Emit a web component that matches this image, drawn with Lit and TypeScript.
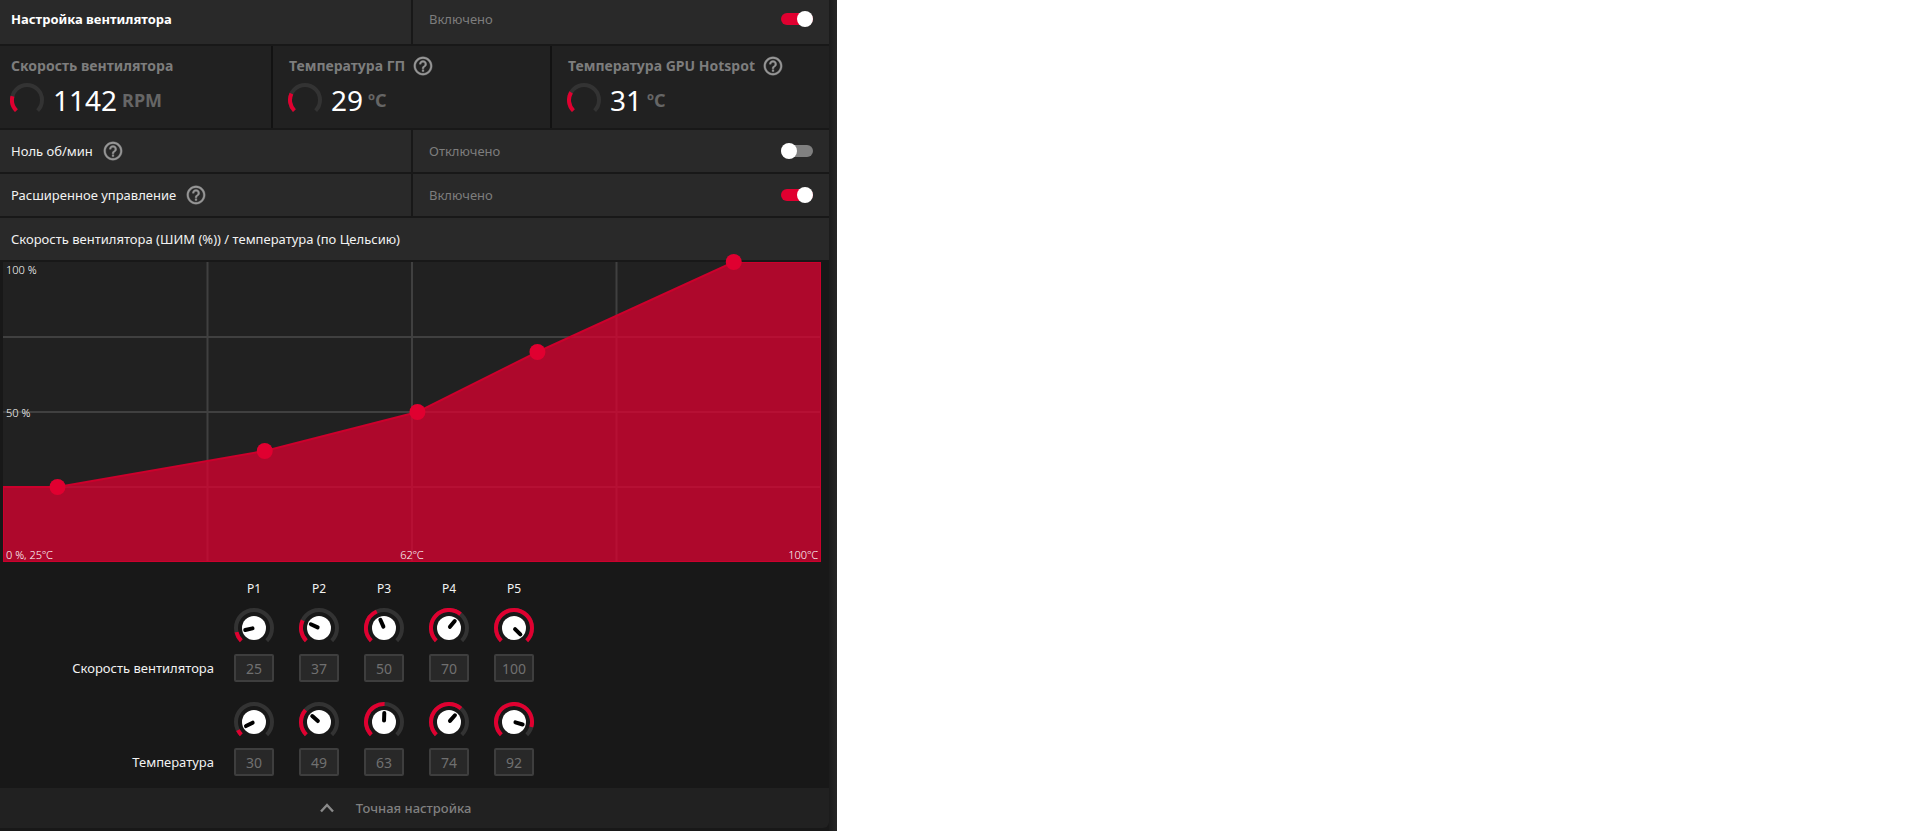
import { LitElement, html, svg, css, nothing } from "lit";
import { customElement, state } from "lit/decorators.js";

interface Point {
  speed: number;
  temp: number;
}

type Field = keyof Point;

const RANGE: Record<Field, [number, number]> = {
  speed: [15, 100],
  temp: [25, 100],
};

const CHART_W = 818;
const CHART_H = 300;

/** Point on a circle; the angle runs clockwise from the top, in degrees. */
function polar(c: number, r: number, deg: number): string {
  const a = ((deg - 90) * Math.PI) / 180;
  return `${(c + r * Math.cos(a)).toFixed(2)} ${(c + r * Math.sin(a)).toFixed(2)}`;
}

/** Arc that starts at the lower left and covers part of a 270 degree sweep. */
function arc(c: number, r: number, part: number): string {
  const sweep = 270 * part;
  return `M${polar(c, r, -135)} A${r} ${r} 0 ${sweep > 180 ? 1 : 0} 1 ${polar(c, r, sweep - 135)}`;
}

@customElement("app-root")
export class AppRoot extends LitElement {
  @state() private fanTuning = true;
  @state() private zeroRpm = false;
  @state() private advanced = true;
  @state() private points: Point[] = [
    { speed: 25, temp: 30 },
    { speed: 37, temp: 49 },
    { speed: 50, temp: 63 },
    { speed: 70, temp: 74 },
    { speed: 100, temp: 92 },
  ];

  static styles = css`
    :host {
      display: block;
      font-family: "Noto Sans", "Open Sans", sans-serif;
      font-size: 13px;
      line-height: 20px;
      color: #f2f2f2;
    }
    * {
      box-sizing: border-box;
    }
    .panel {
      max-width: 837px;
      padding: 0 8px 3px 0;
      background: linear-gradient(to left, #262626, #1b1b1b 8px, #181818 8px);
    }
    .stack {
      display: grid;
      gap: 2px;
    }
    .row {
      display: grid;
      grid-template-columns: 411fr 416fr;
      gap: 2px;
    }
    .cell {
      display: flex;
      align-items: center;
      gap: 11px;
      min-height: 42px;
      padding: 0 16px;
      background: #292929;
    }
    .cell:first-child {
      padding-left: 11px;
    }
    .head .cell {
      min-height: 44px;
      padding-bottom: 6px;
    }
    .head h2 {
      margin: 0;
      font-size: 13px;
      font-weight: 700;
      color: #fff;
    }
    .status {
      justify-content: space-between;
      color: #7d7d7d;
    }
    .help {
      display: flex;
      padding: 0;
      border: 0;
      background: none;
      color: #969696;
    }
    .help svg {
      width: 22px;
      height: 22px;
      margin: 0 -2px;
      fill: currentColor;
      stroke: currentColor;
      stroke-width: 0.4;
    }
    .switch {
      appearance: none;
      display: flex;
      align-items: center;
      width: 32px;
      height: 12px;
      margin: 0;
      border-radius: 6px;
      background: #808080;
    }
    .switch::before {
      content: "";
      width: 16px;
      height: 16px;
      border-radius: 50%;
      background: #fff;
    }
    .switch:checked {
      justify-content: flex-end;
      background: #e00030;
    }
    .metrics {
      display: grid;
      grid-template-columns: 271fr 277fr 277fr;
      gap: 2px;
      background: #121212;
    }
    .metric {
      padding: 9px 16px 5px;
      background: #212121;
    }
    .metric:first-child {
      padding-left: 11px;
    }
    .title {
      display: flex;
      align-items: center;
      gap: 9px;
      height: 22px;
      font-size: 14px;
      font-weight: 700;
      color: #7d7d7d;
    }
    .reading {
      display: flex;
      align-items: center;
      height: 46px;
      gap: 5px;
    }
    .gauge {
      width: 34px;
      height: 34px;
      margin: 0 4px 0 -1px;
    }
    .value {
      font-size: 28px;
      font-weight: 400;
      color: #fff;
    }
    .unit {
      font-size: 18px;
      font-weight: 700;
      color: #666;
    }
    .track {
      fill: none;
      stroke: #333;
      stroke-width: 4;
    }
    .fill {
      fill: none;
      stroke: #e00030;
      stroke-width: 4;
    }
    .chart {
      padding: 0 8px 0 3px;
    }
    .plot {
      display: block;
      width: 100%;
      overflow: visible;
    }
    .plot .back {
      fill: #212121;
    }
    .plot .grid {
      stroke: #404040;
      stroke-width: 2;
    }
    .plot .area {
      fill: #e00030;
      fill-opacity: 0.74;
      stroke: #cc002c;
      stroke-width: 2;
    }
    .plot .dot {
      fill: #e00030;
    }
    .plot text {
      font-size: 11px;
      font-weight: 300;
      fill: #fff;
    }
    .points {
      display: grid;
      grid-template-columns: 209px repeat(5, 40px);
      column-gap: 25px;
      justify-items: center;
      padding: 17px 0 12px;
    }
    .name {
      grid-column: 1;
      justify-self: end;
      margin-right: -5px;
      line-height: 28px;
    }
    .point {
      font-size: 12px;
      line-height: 20px;
      padding-bottom: 9px;
    }
    .point:first-child {
      grid-column: 2;
    }
    .dial {
      position: relative;
      width: 40px;
      height: 40px;
      margin-bottom: 6px;
    }
    .dial.first {
      grid-column: 2;
    }
    .dial svg {
      display: block;
      width: 40px;
      height: 40px;
    }
    .dial input {
      position: absolute;
      inset: 0;
      width: 100%;
      height: 100%;
      margin: 0;
      opacity: 0;
    }
    .disc {
      fill: #fff;
    }
    .hand {
      stroke: #000;
      stroke-width: 4;
      stroke-linecap: round;
    }
    .number {
      width: 40px;
      height: 28px;
      margin: 0 0 20px;
      padding: 0;
      border: 2px solid #3e3e3e;
      border-radius: 2px;
      background: #282828;
      color: #707070;
      font: inherit;
      font-size: 14px;
      text-align: center;
    }
    .number.last {
      margin-bottom: 0;
    }
    .fine {
      display: flex;
      align-items: center;
      justify-content: center;
      gap: 22px;
      width: 100%;
      height: 40px;
      padding: 0 38px 0 0;
      border: 0;
      border-radius: 0 0 6px 0;
      background: #212121;
      color: #808080;
      font: inherit;
      font-weight: 500;
    }
    .fine svg {
      width: 14px;
      height: 10px;
      fill: none;
      stroke: #8a8a8a;
      stroke-width: 2.4;
    }
  `;

  private setPoint(index: number, field: Field, event: Event) {
    const [min, max] = RANGE[field];
    const raw = Number((event.target as HTMLInputElement).value);
    const value = Math.min(max, Math.max(min, raw || min));
    this.points = this.points.map((p, i) => (i === index ? { ...p, [field]: value } : p));
  }

  private help(topic: string) {
    return html`<button class="help" type="button" aria-label=${`Справка: ${topic}`}>
      <svg viewBox="0 0 24 24" aria-hidden="true">
        <path
          d="M11 18h2v-2h-2v2zm1-16C6.48 2 2 6.48 2 12s4.48 10 10 10 10-4.48 10-10S17.52 2 12 2zm0 18c-4.41 0-8-3.59-8-8s3.59-8 8-8 8 3.59 8 8-3.59 8-8 8zm0-14c-2.21 0-4 1.79-4 4h2c0-1.1.9-2 2-2s2 .9 2 2c0 2-3 1.75-3 5h2c0-2.25 3-2.5 3-5 0-2.21-1.79-4-4-4z"
        />
      </svg>
    </button>`;
  }

  private status(id: string, on: boolean, change: (on: boolean) => void) {
    return html`<div class="cell status">
      <label for=${id}>${on ? "Включено" : "Отключено"}</label>
      <input
        id=${id}
        class="switch"
        type="checkbox"
        role="switch"
        .checked=${on}
        @change=${(e: Event) => change((e.target as HTMLInputElement).checked)}
      />
    </div>`;
  }

  private metric(title: string, value: number, unit: string, part: number, help: boolean) {
    return html`<div class="metric">
      <div class="title"><span>${title}</span>${help ? this.help(title) : nothing}</div>
      <div class="reading">
        <svg class="gauge" viewBox="0 0 34 34" aria-hidden="true">
          <path class="track" d=${arc(17, 15, 1)} />
          <path class="fill" d=${arc(17, 15, part)} />
        </svg>
        <span class="value">${value}</span>
        <span class="unit">${unit}</span>
      </div>
    </div>`;
  }

  private chart() {
    const dots = this.points.map((p) => ({
      x: ((p.temp - 25) / 75) * CHART_W,
      y: CHART_H - (p.speed / 100) * CHART_H,
    }));
    const line = [{ x: 0, y: dots[0].y }, ...dots, { x: CHART_W, y: dots[dots.length - 1].y }]
      .map((d) => `${d.x.toFixed(1)},${d.y.toFixed(1)}`)
      .join(" ");
    const steps = [1, 2, 3];
    return html`<div class="chart">
      <svg class="plot" viewBox="0 0 ${CHART_W} ${CHART_H}" role="img" aria-label="Кривая вентилятора">
        <clipPath id="bounds"><rect width=${CHART_W} height=${CHART_H} /></clipPath>
        <rect class="back" width=${CHART_W} height=${CHART_H} />
        ${steps.map((s) => svg`<path class="grid" d="M${(s * CHART_W) / 4} 0V${CHART_H}" />`)}
        ${steps.map((s) => svg`<path class="grid" d="M0 ${(s * CHART_H) / 4}H${CHART_W}" />`)}
        <polygon
          class="area"
          clip-path="url(#bounds)"
          points="${line} ${CHART_W},${CHART_H} 0,${CHART_H}"
        />
        ${dots.map((d) => svg`<circle class="dot" cx=${d.x} cy=${d.y} r="8" />`)}
        <text x="3" y="12">100 %</text>
        <text x="3" y="155">50 %</text>
        <text x="3" y="297">0 %, 25ºC</text>
        <text x="409" y="297" text-anchor="middle">62ºC</text>
        <text x="815" y="297" text-anchor="end">100ºC</text>
      </svg>
    </div>`;
  }

  private dial(point: Point, index: number, field: Field, label: string) {
    const [min, max] = RANGE[field];
    const part = (point[field] - min) / (max - min);
    return html`<div class="dial ${index === 0 ? "first" : ""}">
      <svg viewBox="0 0 40 40" aria-hidden="true">
        <path class="track" d=${arc(20, 18, 1)} />
        <path class="fill" d=${arc(20, 18, part)} />
        <circle class="disc" cx="20" cy="20" r="12" />
        <path class="hand" d="M20 18.5V11" transform="rotate(${270 * part - 135} 20 20)" />
      </svg>
      <input
        type="range"
        min=${min}
        max=${max}
        .value=${String(point[field])}
        aria-label=${`${label} P${index + 1}`}
        @input=${(e: Event) => this.setPoint(index, field, e)}
      />
    </div>`;
  }

  private fieldRows(field: Field, label: string, last: boolean) {
    return html`
      ${this.points.map((p, i) => this.dial(p, i, field, label))}
      <label class="name" for="${field}-0">${label}</label>
      ${this.points.map(
        (p, i) => html`<input
          id="${field}-${i}"
          class="number ${last ? "last" : ""}"
          type="text"
          inputmode="numeric"
          aria-label=${`${label} P${i + 1}`}
          .value=${String(p[field])}
          @change=${(e: Event) => this.setPoint(i, field, e)}
        />`
      )}
    `;
  }

  render() {
    return html`<main class="panel">
      <div class="stack">
        <div class="row head">
          <div class="cell"><h2>Настройка вентилятора</h2></div>
          ${this.status("tuning", this.fanTuning, (on) => (this.fanTuning = on))}
        </div>
        <div class="metrics">
          ${this.metric("Скорость вентилятора", 1142, "RPM", 0.22, false)}
          ${this.metric("Температура ГП", 29, "ºC", 0.26, true)}
          ${this.metric("Температура GPU Hotspot", 31, "ºC", 0.28, true)}
        </div>
        <div class="row">
          <div class="cell"><span>Ноль об/мин</span>${this.help("Ноль об/мин")}</div>
          ${this.status("zero", this.zeroRpm, (on) => (this.zeroRpm = on))}
        </div>
        <div class="row">
          <div class="cell"><span>Расширенное управление</span>${this.help("Расширенное управление")}</div>
          ${this.status("advanced", this.advanced, (on) => (this.advanced = on))}
        </div>
        <div class="heading">
          <div class="cell">Скорость вентилятора (ШИМ (%)) / температура (по Цельсию)</div>
        </div>
        ${this.chart()}
      </div>
      <div class="points">
        ${this.points.map((_, i) => html`<span class="point">P${i + 1}</span>`)}
        ${this.fieldRows("speed", "Скорость вентилятора", false)}
        ${this.fieldRows("temp", "Температура", true)}
      </div>
      <button class="fine" type="button">
        <svg viewBox="0 0 14 10" aria-hidden="true"><path d="M1 8.5 7 2l6 6.5" /></svg>
        <span>Точная настройка</span>
      </button>
    </main>`;
  }
}
